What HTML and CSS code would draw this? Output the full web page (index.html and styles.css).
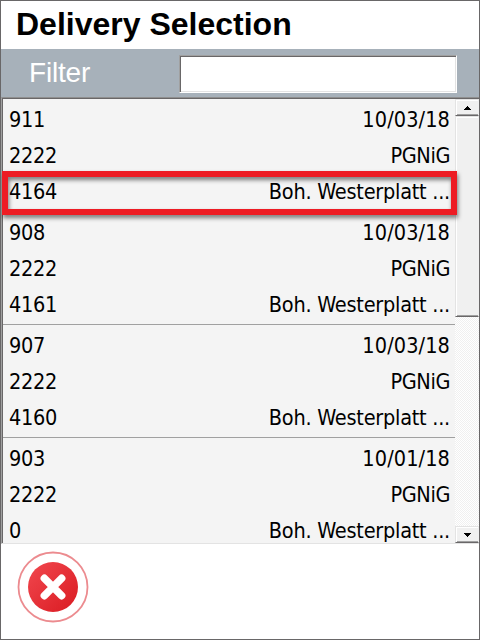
FILE: index.html
```
<!DOCTYPE html>
<html lang="en">
<head>
<meta charset="utf-8">
<title>Delivery Selection</title>
<link rel="stylesheet" href="styles.css">
</head>
<body>
<main class="window">
  <h1 class="title"><span>Delivery Selection</span></h1>
  <div class="filter">
    <label for="filter">Filter</label>
    <input id="filter" type="text">
  </div>
  <section class="list">
    <div class="items">
      <article class="item">
        <div class="row"><span class="num">911</span><span class="date">10/03/18</span></div>
        <div class="row"><span class="num">2222</span><span class="company">PGNiG</span></div>
        <div class="row"><span class="num">4164</span><span class="address">Boh. Westerplatt ...</span></div>
      </article>
      <article class="item">
        <div class="row"><span class="num">908</span><span class="date">10/03/18</span></div>
        <div class="row"><span class="num">2222</span><span class="company">PGNiG</span></div>
        <div class="row"><span class="num">4161</span><span class="address">Boh. Westerplatt ...</span></div>
      </article>
      <article class="item">
        <div class="row"><span class="num">907</span><span class="date">10/03/18</span></div>
        <div class="row"><span class="num">2222</span><span class="company">PGNiG</span></div>
        <div class="row"><span class="num">4160</span><span class="address">Boh. Westerplatt ...</span></div>
      </article>
      <article class="item">
        <div class="row"><span class="num">903</span><span class="date">10/01/18</span></div>
        <div class="row"><span class="num">2222</span><span class="company">PGNiG</span></div>
        <div class="row"><span class="num">0</span><span class="address">Boh. Westerplatt ...</span></div>
      </article>
    </div>
    <div class="scrollbar">
      <div class="button"><svg width="7" height="4" viewBox="0 0 7 4" shape-rendering="crispEdges"><path d="M3 0h1v1h1v1h1v1h1v1H0V3h1V2h1V1h1z"/></svg></div>
      <div class="thumb"></div>
      <div class="track"></div>
      <div class="button"><svg width="7" height="4" viewBox="0 0 7 4" shape-rendering="crispEdges"><path d="M0 0h7v1H6v1H5v1H4v1H3V3H2V2H1V1H0z"/></svg></div>
    </div>
    <div class="highlight"></div>
  </section>
  <footer class="footer">
    <svg class="close" width="72" height="72" viewBox="0 0 72 72" role="img">
      <defs><linearGradient id="red" x1="0" y1="0" x2="1" y2="1"><stop offset=".15" stop-color="#ee4148"/><stop offset=".9" stop-color="#dc1f26"/></linearGradient></defs>
      <circle cx="36" cy="36" r="34.5" fill="#fff" stroke="#ec8b8f" stroke-width="1.8"/>
      <circle cx="36" cy="36" r="25" fill="url(#red)"/>
      <path d="M27.4 27.4l17.2 17.2M44.6 27.4L27.4 44.6" stroke="#fff" stroke-width="7.6" stroke-linecap="round"/>
    </svg>
  </footer>
</main>
</body>
</html>
```
FILE: styles.css
```
* { box-sizing: border-box; }
body { margin: 0; }
.window {
  display: flex;
  flex-direction: column;
  width: 480px;
  height: 640px;
  border: 1px solid #696768;
  background: #fff;
  overflow: hidden;
}
.title {
  flex: 0 0 48px;
  margin: 0;
  padding-left: 15px;
  font: bold 32px/46px "Liberation Sans", Arial, sans-serif;
  color: #000;
}
.filter {
  flex: 0 0 48px;
  display: flex;
  justify-content: space-between;
  padding: 6px 22px 4px 28px;
  background: #a7b1ba;
}
.filter label {
  font: 28px/36px "Liberation Sans", Arial, sans-serif;
  letter-spacing: -0.2px;
  color: #fff;
}
.filter input {
  width: 278px;
  height: 38px;
  border: 1px solid;
  border-color: #a0a0a0 #fff #fff #a0a0a0;
  border-radius: 0;
  outline: 0;
  background: #fff;
  box-shadow: inset 1px 1px #696768, inset -1px -1px #e3e3e3;
}
.list {
  position: relative;
  flex: 0 0 447px;
  height: 447px;
  min-height: 0;
  display: flex;
  border: 1px solid;
  border-color: #8f8f8f transparent #e3e3e3 #a0a0a0;
  border-right: 0;
  background: #f4f4f4;
}
.items {
  flex: 1;
  height: 445px;
  overflow: hidden;
  border-top: 1px solid #696768;
  border-left: 1px solid #696768;
}
.item {
  height: 113px;
  padding: 3px 5px 0 6px;
  border-bottom: 1px solid #a0a0a0;
}
.row {
  display: flex;
  justify-content: space-between;
  height: 36px;
  font: 21.5px/36px "DejaVu Sans Condensed", "DejaVu Sans", sans-serif;
  font-stretch: condensed;
  color: #000;
  white-space: pre;
}
.num { letter-spacing: -0.3px; }
.date { letter-spacing: 0.1px; }
.company { letter-spacing: -0.4px; }
.address { letter-spacing: -0.25px; }
.scrollbar {
  flex: 0 0 24px;
  height: 445px;
  display: flex;
  flex-direction: column;
  border-top: 1px solid #696768;
}
.button, .thumb {
  border: 1px solid;
  border-color: #e3e3e3 #f0f0f0 #696768 #e3e3e3;
  background: #f0f0f0;
  box-shadow: inset 1px 1px #fff, inset 0 -1px #a0a0a0;
}
.button {
  flex: 0 0 17px;
  display: flex;
  align-items: center;
  justify-content: center;
}
.thumb { flex: 0 0 201px; }
.track {
  flex: 1;
  background: repeating-conic-gradient(#fff 0 25%, #f0f0f0 0 50%) 0 0 / 2px 2px;
}
.highlight {
  position: absolute;
  left: 0;
  top: 73px;
  width: 455px;
  height: 44px;
  border: 6px solid #ed1c24;
  filter: drop-shadow(1px 3px 2px rgba(0, 0, 0, 0.5));
}
.footer {
  flex: 1;
  padding: 7px 0 0 16px;
}
.close { display: block; }
```
